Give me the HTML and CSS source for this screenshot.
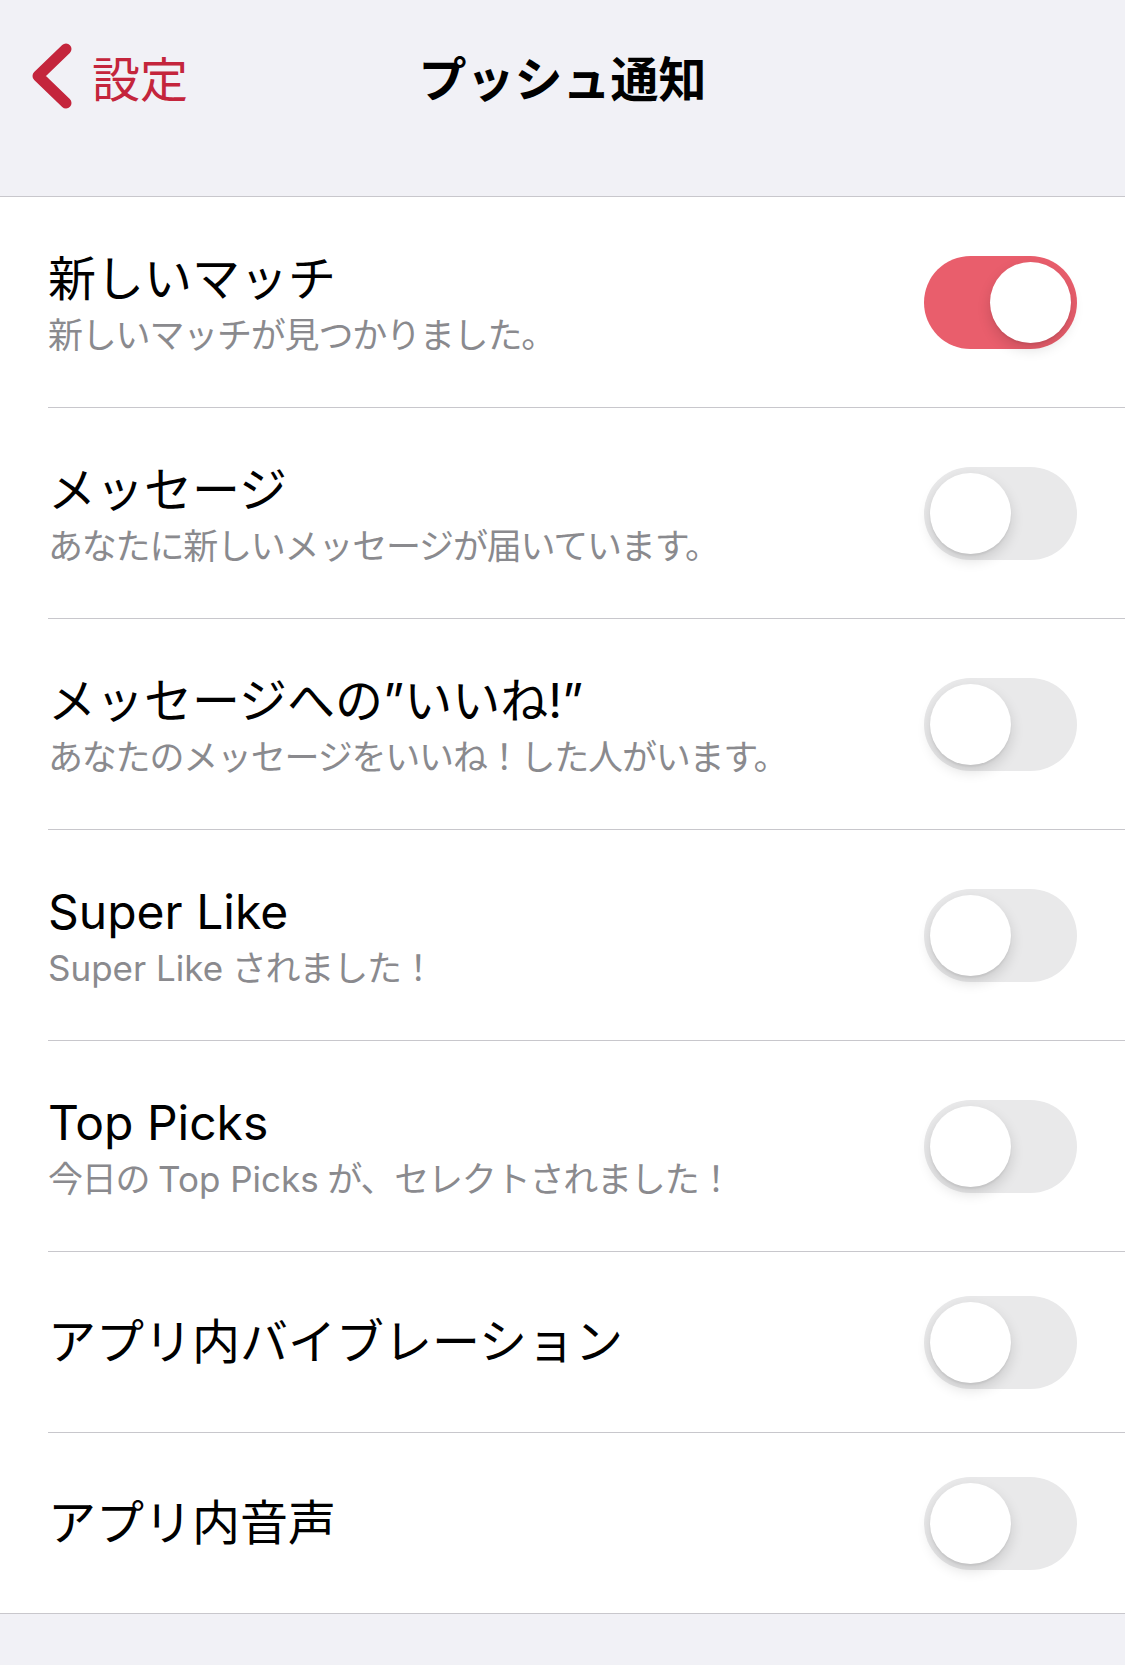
FILE: index.html
```html
<!DOCTYPE html>
<html lang="ja">
<head>
    <meta charset="UTF-8">
    <meta name="viewport" content="width=device-width, initial-scale=1.0">
    <title>プッシュ通知</title>
    <link rel="stylesheet" href="styles.css">
</head>
<body>
    <header class="header">
        <div class="nav">
            <a class="back" href="#">
                <svg class="back-icon" width="50" height="76" viewBox="0 0 50 76">
                    <polyline points="40,11 12,38 40,65" fill="none" stroke="#c4253c" stroke-width="11" stroke-linecap="round" stroke-linejoin="round"/>
                </svg>
                <span>設定</span>
            </a>
            <h1 class="nav-title">プッシュ通知</h1>
            <div></div>
        </div>
    </header>

    <ul class="list">
        <li class="row">
            <div class="row-inner">
                <div class="text">
                    <div class="title">新しいマッチ</div>
                    <div class="sub">新しいマッチが見つかりました。</div>
                </div>
                <div class="toggle on"><div class="knob"></div></div>
            </div>
        </li>
        <li class="row">
            <div class="row-inner">
                <div class="text">
                    <div class="title">メッセージ</div>
                    <div class="sub">あなたに新しいメッセージが届いています。</div>
                </div>
                <div class="toggle"><div class="knob"></div></div>
            </div>
        </li>
        <li class="row">
            <div class="row-inner">
                <div class="text">
                    <div class="title">メッセージへの”いいね!”</div>
                    <div class="sub">あなたのメッセージをいいね！した人がいます。</div>
                </div>
                <div class="toggle"><div class="knob"></div></div>
            </div>
        </li>
        <li class="row">
            <div class="row-inner">
                <div class="text">
                    <div class="title">Super Like</div>
                    <div class="sub"><span class="latin">Super Like</span> されました！</div>
                </div>
                <div class="toggle"><div class="knob"></div></div>
            </div>
        </li>
        <li class="row">
            <div class="row-inner">
                <div class="text">
                    <div class="title">Top Picks</div>
                    <div class="sub">今日の <span class="latin">Top Picks</span> が、セレクトされました！</div>
                </div>
                <div class="toggle"><div class="knob"></div></div>
            </div>
        </li>
        <li class="row short">
            <div class="row-inner">
                <div class="text">
                    <div class="title">アプリ内バイブレーション</div>
                </div>
                <div class="toggle"><div class="knob"></div></div>
            </div>
        </li>
        <li class="row short">
            <div class="row-inner">
                <div class="text">
                    <div class="title">アプリ内音声</div>
                </div>
                <div class="toggle"><div class="knob"></div></div>
            </div>
        </li>
    </ul>
</body>
</html>
```

FILE: styles.css
```css
body, html {
    margin: 0;
    padding: 0;
    background: #f1f1f6;
    font-family: Inter, "Noto Sans CJK JP", sans-serif;
    color: #000;
}
.header {
    height: 196px;
    border-bottom: 1px solid #c8c7cc;
}
.nav {
    height: 152px;
    display: grid;
    grid-template-columns: 1fr auto 1fr;
    align-items: center;
}
.back {
    display: flex;
    align-items: center;
    gap: 16px;
    padding-left: 26px;
    color: #c4253c;
    font-size: 48px;
    text-decoration: none;
}
.back span {
    font-family: "Noto Sans CJK JP", sans-serif;
}
.nav-title {
    margin: 0;
    font-size: 48px;
    font-weight: 700;
    font-family: "Noto Sans CJK JP", sans-serif;
}
.list {
    list-style: none;
    margin: 0;
    padding: 0;
    background: #fff;
    border-bottom: 1px solid #c8c7cc;
}
.row {
    padding-left: 48px;
}
.row-inner {
    height: 211px;
    box-sizing: border-box;
    display: flex;
    align-items: center;
    justify-content: space-between;
    padding-right: 48px;
    border-bottom: 1px solid #c8c7cc;
}
.row.short .row-inner {
    height: 181px;
}
.row:last-child .row-inner {
    height: 180px;
    border-bottom: none;
}
.text {
    padding-top: 4px;
}
.title {
    font-size: 48px;
    line-height: 58px;
}
.sub {
    margin-top: 4px;
    font-size: 35px;
    line-height: 46px;
    letter-spacing: -1.2px;
    color: #8a8a8e;
}
.sub .latin {
    letter-spacing: 0;
}
.row.short .text {
    padding-top: 0;
}
.toggle {
    width: 153px;
    height: 93px;
    box-sizing: border-box;
    padding: 6px;
    border-radius: 47px;
    background: #e9e9ea;
    display: flex;
    justify-content: flex-start;
    flex-shrink: 0;
}
.toggle.on {
    background: #e95e6c;
    justify-content: flex-end;
}
.knob {
    width: 81px;
    height: 81px;
    border-radius: 50%;
    background: #fff;
    box-shadow: 0 6px 14px rgba(0, 0, 0, 0.14), 0 2px 2px rgba(0, 0, 0, 0.06);
}
```
